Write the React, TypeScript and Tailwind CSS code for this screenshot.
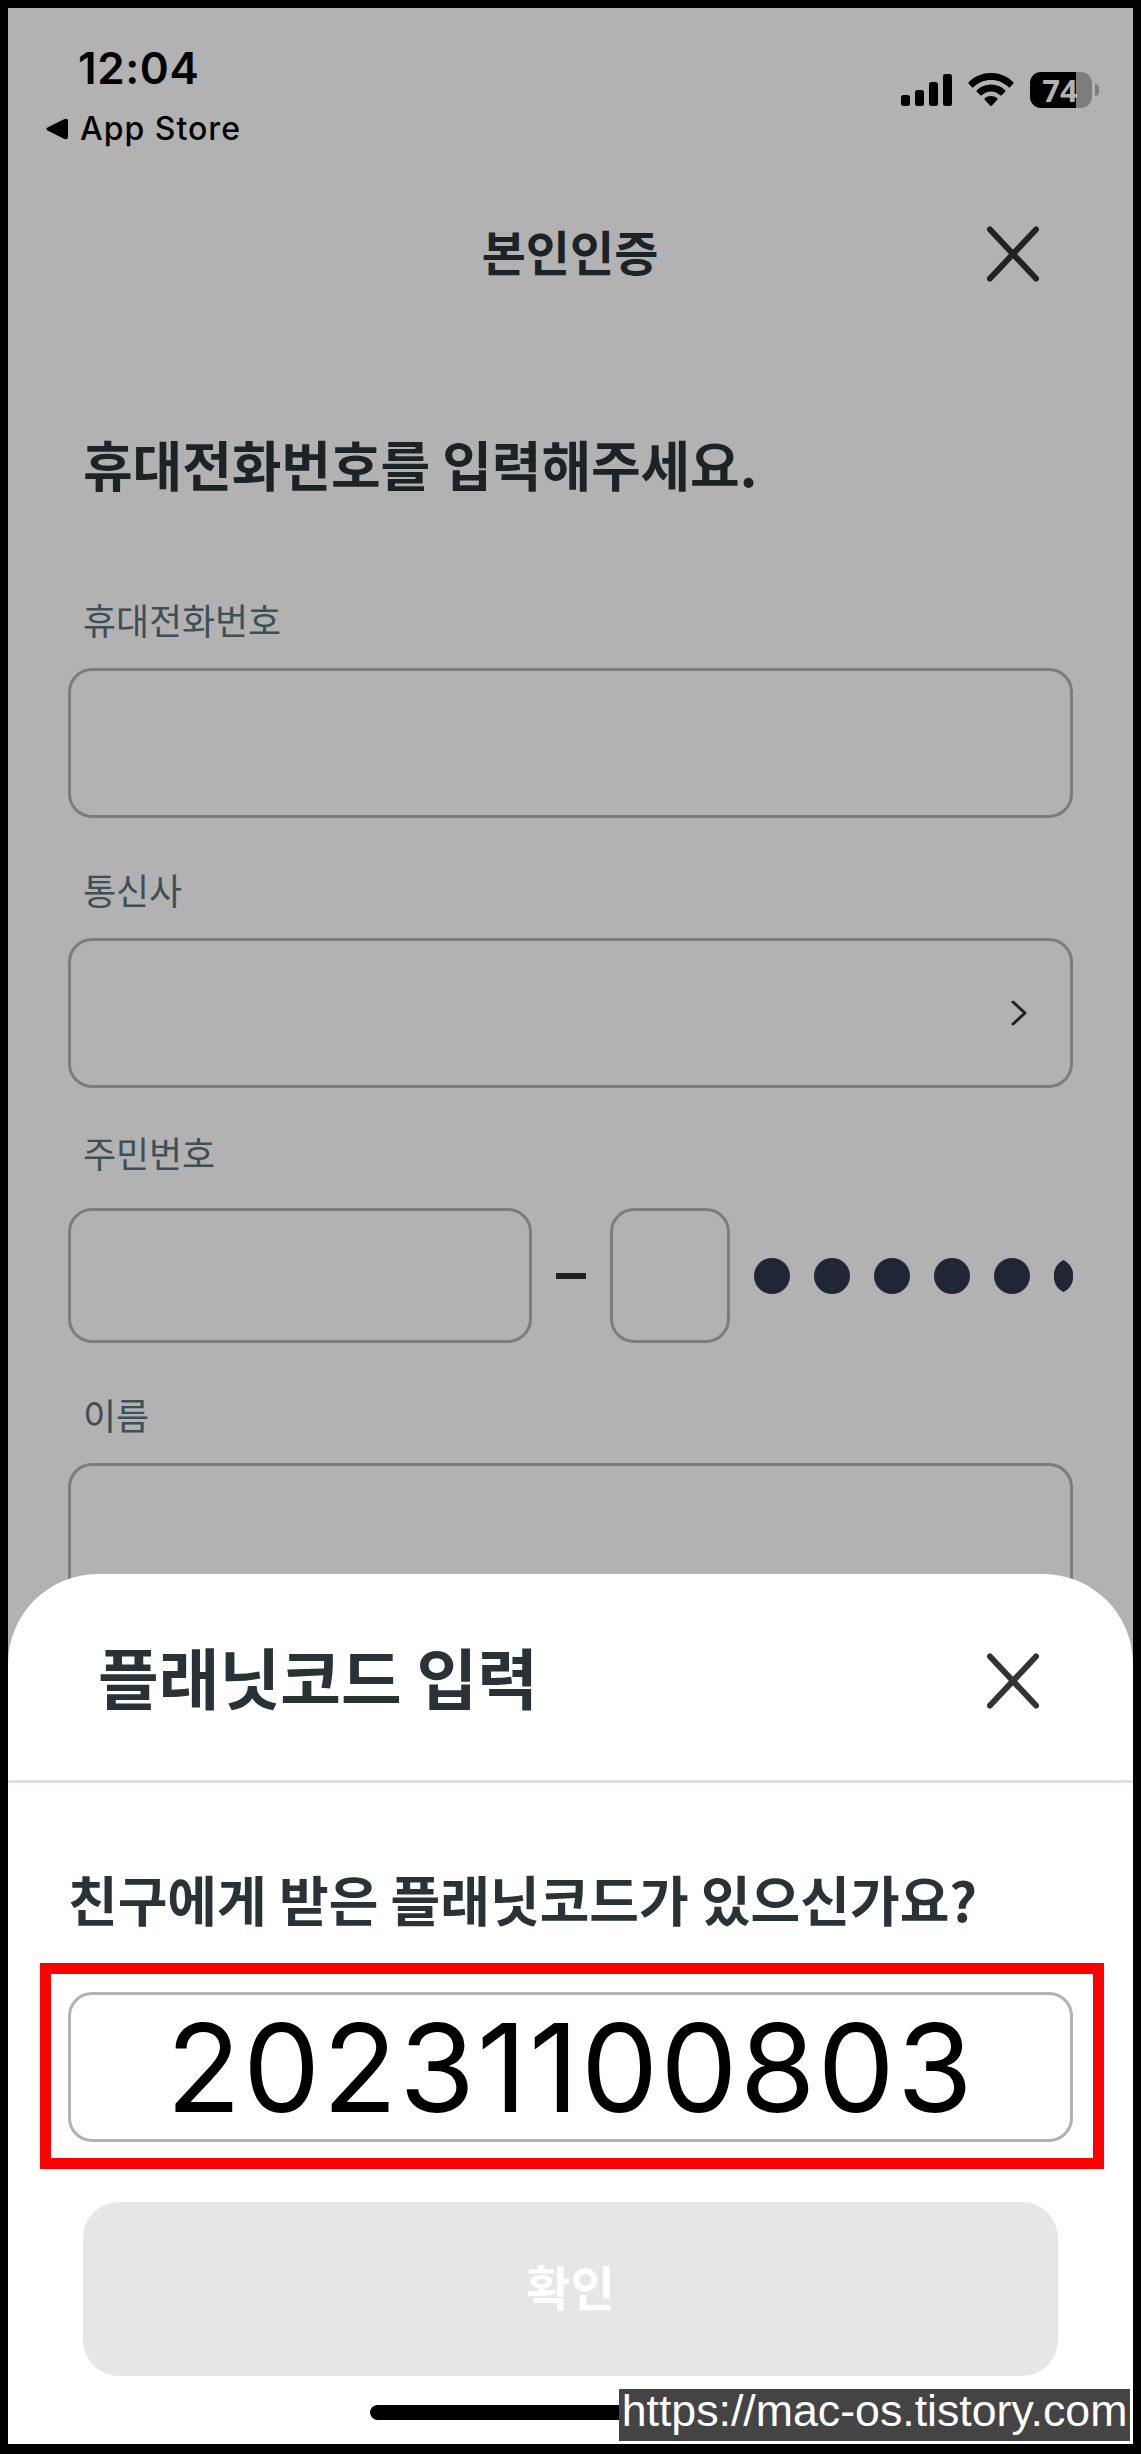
import type { ReactNode } from "react";

const KR = "font-['Noto_Sans_CJK_KR',sans-serif]";

function CloseIcon({ color }: { color: string }) {
  return (
    <svg width="52" height="56" viewBox="0 0 52 56" fill="none" stroke={color} strokeWidth="6" strokeLinecap="round">
      <path d="M3 3.5 49 52.5M49 3.5 3 52.5" />
    </svg>
  );
}

function Signal() {
  return (
    <svg width="51" height="32" viewBox="0 0 51 32">
      <rect x="0" y="21" width="9" height="11" rx="2.5" />
      <rect x="14" y="16" width="9" height="16" rx="2.5" />
      <rect x="28" y="8" width="9" height="24" rx="2.5" />
      <rect x="42" y="0" width="9" height="32" rx="2.5" />
    </svg>
  );
}

function Wifi() {
  return (
    <svg width="46" height="34" viewBox="0 0 46 34">
      <path d="M23 0C32 0 39.6 3.4 45.4 9.2Q46 9.9 45.4 10.5L42 14.2Q41.3 14.8 40.6 14.2C35.800 9.600 29.700 7 23 7S10.200 9.600 5.400 14.200Q4.700 14.800 4 14.200L.6 10.500Q0 9.900 .6 9.200C6.400 3.400 14 0 23 0Z" />
      <path d="M23 11.500C28.600 11.500 33.500 13.700 37.200 17.300Q37.800 18 37.200 18.700L33.600 22.300Q32.900 22.900 32.200 22.300C29.700 20 26.500 18.600 23 18.600S16.300 20 13.800 22.300Q13.100 22.900 12.400 22.300L8.800 18.700Q8.200 18 8.800 17.300C12.500 13.700 17.400 11.500 23 11.500Z" />
      <path d="M23 23C25.600 23 27.500 23.900 29.300 25.300Q30 26 29.300 26.800L23.700 32.800Q23 33.500 22.300 32.800L16.700 26.800Q16 26 16.700 25.300C18.500 23.900 20.400 23 23 23Z" />
    </svg>
  );
}

function Battery() {
  return (
    <div className="flex items-center gap-[3px]">
      <div className="flex h-9 w-[62px] items-center justify-center rounded-[11px] bg-[linear-gradient(90deg,#000_46px,#7d7d7d_46px)] pr-[2px] font-['Open_Sans',sans-serif] text-[31px] leading-9 font-bold text-[#b2b2b2]">
        74
      </div>
      <div className="h-3 w-1 rounded-r-full bg-[#7d7d7d]" />
    </div>
  );
}

function Label({ children, className }: { children: ReactNode; className: string }) {
  return (
    <div className={`h-[52px] pl-[75px] text-[36px] leading-[50px] tracking-[-0.1px] text-[#3f4f56] ${className}`}>
      {children}
    </div>
  );
}

const box = "rounded-[24px] border-[3px] border-[#7d7d7d]";

export default function App() {
  return (
    <div className={`relative h-[2454px] w-[1141px] overflow-hidden border-8 border-b-[10px] border-black bg-[#b2b2b2] ${KR}`}>
      {/* Status bar */}
      <div className="flex h-[141px] justify-between pt-[38px] pr-[34px] pl-[38px] font-['Inter',sans-serif] text-black">
        <div>
          <div className="pl-[32px] text-[44px] leading-[44px] font-semibold tracking-[0.6px]">12:04</div>
          <div className="mt-[19px] flex items-center">
            <svg width="22" height="22" viewBox="0 0 22 22">
              <path d="M1.500 9.500 18.500 1Q22 0 22 3V19Q22 22 18.500 21L1.500 12.500Q-1 11 1.500 9.500Z" />
            </svg>
            <span className="pl-[12px] text-[32px] leading-10 font-medium tracking-[1px]">App Store</span>
          </div>
        </div>
        <div className="mt-[26px] flex h-9 items-center gap-4">
          <Signal />
          <Wifi />
          <Battery />
        </div>
      </div>

      {/* Page header */}
      <header className="mt-[65px] grid h-[72px] grid-cols-[1fr_auto_1fr] items-center pr-[94px] pl-[94px] text-[#1b2326]">
        <span />
        <h1 className="pr-px text-[48px] leading-[72px] font-bold">본인인증</h1>
        <button className="mt-[7px] justify-self-end">
          <CloseIcon color="#222222" />
        </button>
      </header>

      {/* Identity form */}
      <h2 className="mt-[138px] pl-[75px] text-[54px] leading-[80px] font-bold tracking-[-0.1px] text-[#1b2326]">
        휴대전화번호를 입력해주세요.
      </h2>

      <Label className="mt-[90px]">휴대전화번호</Label>
      <div className={`mt-[22px] mr-[60px] ml-[60px] h-[150px] ${box}`} />

      <Label className="mt-[46px]">통신사</Label>
      <div className={`mt-[22px] mr-[60px] ml-[60px] flex h-[150px] items-center justify-end pr-[43px] ${box}`}>
        <svg width="16" height="26" viewBox="0 0 16 26" fill="none" stroke="#1b2326" strokeWidth="3" strokeLinecap="round" strokeLinejoin="round">
          <path d="M2 2 14 13 2 24" />
        </svg>
      </div>

      <Label className="mt-[39px]">주민번호</Label>
      <div className="mt-[29px] mr-[60px] ml-[60px] flex h-[135px] items-center">
        <div className={`h-full w-[464px] ${box}`} />
        <div className="mx-6 h-[6px] w-[30px] bg-[#1b2326]" />
        <div className={`h-full w-[120px] ${box}`} />
        <div className="ml-6 flex items-center gap-6">
          {[0, 1, 2, 3, 4].map((i) => (
            <div key={i} className="size-9 rounded-full bg-[#212636]" />
          ))}
          <svg width="19" height="36" viewBox="0 0 19 36" fill="#212636">
            <path d="M9.500 2A18 18 0 0 1 9.500 34A18 18 0 0 1 9.500 2Z" />
          </svg>
        </div>
      </div>

      <Label className="mt-[46px]">이름</Label>
      <div className={`mt-[22px] mr-[60px] ml-[60px] h-[150px] ${box}`} />

      {/* Bottom sheet */}
      <section className="absolute inset-x-0 bottom-0 h-[870px] rounded-t-[90px] bg-white">
        <div className="flex h-[209px] items-center justify-between border-b-[3px] border-[#d9e1e4] pr-[94px] pl-[90px]">
          <h2 className="-mt-[4px] text-[66px] leading-[96px] font-bold text-[#293237]">플래닛코드 입력</h2>
          <button className="mt-[7px]">
            <CloseIcon color="#333333" />
          </button>
        </div>
        <p className="mt-[76px] pl-[60px] text-[54px] leading-[80px] font-bold whitespace-nowrap text-[#293237]">
          친구에게 받은 플래닛코드가 있으신가요?
        </p>
        <div className="mt-[24px] mr-[29px] ml-8 h-[206px] border-[11px] border-[#ff0000] pt-[18px] pr-5 pl-[17px]">
          <div className="flex h-[150px] items-center justify-center rounded-[24px] border-[3px] border-[#b2b2b2] pt-[3px] font-['Inter',sans-serif] text-[122.500px] leading-none tracking-[2.100px] text-black">
            20231100803
          </div>
        </div>
        <button className="mt-[33px] ml-[75px] block h-[174px] w-[975px] rounded-[36px] bg-[#e6e6e6] pb-[9px] text-[48px] font-bold text-white">
          확인
        </button>
        <div className="mt-[29px] ml-[362px] h-[15px] w-[401px] rounded-full bg-black" />
      </section>

      <div className="absolute right-[3px] bottom-[3px] flex h-[52px] w-[511px] items-center justify-center bg-[#444444] pb-[7px] font-['Liberation_Sans',sans-serif] text-[44.700px] leading-none whitespace-nowrap text-white">
        https://mac-os.tistory.com
      </div>
    </div>
  );
}
